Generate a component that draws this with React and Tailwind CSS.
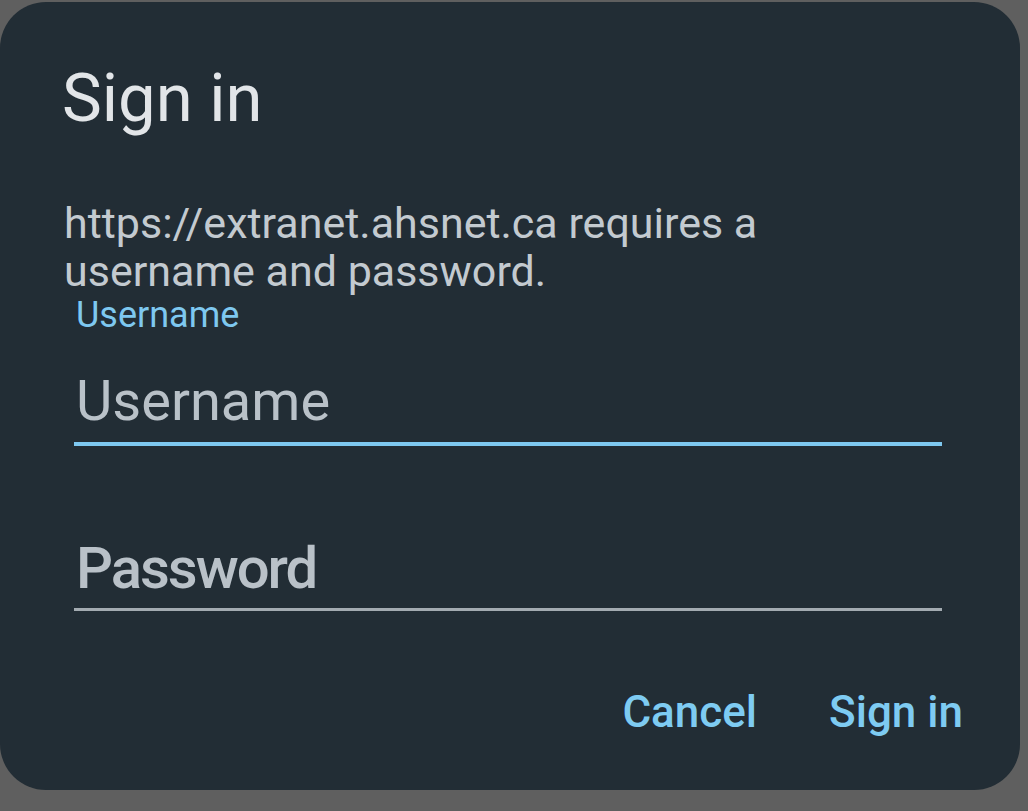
export default function App() {
  return (
    <div className="w-[1028px] h-[811px] bg-[#5f5f5f] overflow-hidden" style={{ fontFamily: 'Roboto, "Noto Sans", sans-serif' }}>
      <div className="mt-[2px] w-[1020px] h-[788px] rounded-[46px] bg-[#222d35] flex flex-col">
        {/* Title */}
        <h1 className="ml-[62px] mt-[58px] text-[67px] leading-[76px] font-normal text-[#e2e5e8]">
          Sign in
        </h1>

        {/* Message */}
        <p className="ml-[64px] mt-[63px] w-[720px] text-[43px] leading-[48px] text-[#c3cad0]">
          https://extranet.ahsnet.ca requires a username and password.
        </p>

        {/* Username field */}
        <div className="ml-[74px] w-[868px] flex flex-col">
          <label className="ml-[2px] text-[36px] leading-[40px] text-[#7ec8f0]">Username</label>
          <div className="mt-[34px] ml-[2px] text-[56px] leading-[64px] text-[#b9c1c8]">Username</div>
          <div className="mt-[9px] h-[4px] bg-[#7ec8f0]" />
        </div>

        {/* Password field */}
        <div className="ml-[74px] mt-[90px] w-[868px] flex flex-col">
          <div className="ml-[2px] text-[58px] leading-[64px] font-medium tracking-[-2px] text-[#b9c1c8]">Password</div>
          <div className="mt-[8px] h-[3px] bg-[#a3abb1]" />
        </div>

        {/* Actions */}
        <div className="mt-[75px] mr-[57px] flex justify-end gap-[72px]">
          <button className="text-[44px] leading-[52px] font-medium text-[#7ecbf2]">Cancel</button>
          <button className="text-[44px] leading-[52px] font-medium text-[#7ecbf2]">Sign in</button>
        </div>
      </div>
    </div>
  );
}
